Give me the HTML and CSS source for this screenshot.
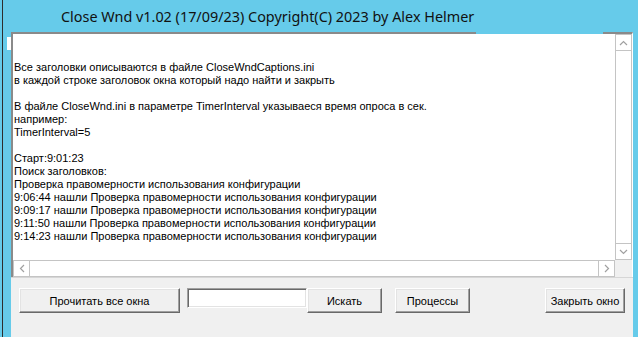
FILE: index.html
```html
<!DOCTYPE html>
<html lang="ru">
<head>
    <meta charset="UTF-8">
    <title>Close Wnd</title>
    <link rel="stylesheet" href="styles.css">
</head>
<body>
<div class="window">
    <div class="titlebar">
        <span class="caption">Close Wnd v1.02 (17/09/23) Copyright(C) 2023 by Alex Helmer</span>
    </div>
    <div class="client">
        <div class="memo">
            <div class="memo-text">Все заголовки описываются в файле CloseWndCaptions.ini
в каждой строке заголовок окна который надо найти и закрыть

В файле CloseWnd.ini в параметре TimerInterval указываеся время опроса в сек.
например:
TimerInterval=5

Старт:9:01:23
Поиск заголовков:
Проверка правомерности использования конфигурации
9:06:44 нашли Проверка правомерности использования конфигурации
9:09:17 нашли Проверка правомерности использования конфигурации
9:11:50 нашли Проверка правомерности использования конфигурации
9:14:23 нашли Проверка правомерности использования конфигурации</div>
            <div class="vscroll">
                <div class="arrow-box">
                    <svg width="9" height="6" viewBox="0 0 9 6"><path d="M1 5 L4.5 1.5 L8 5" fill="none" stroke="#a0a0a0" stroke-width="1.2"/></svg>
                </div>
                <div class="track"></div>
                <div class="arrow-box down">
                    <svg width="9" height="6" viewBox="0 0 9 6"><path d="M1 1 L4.5 4.5 L8 1" fill="none" stroke="#a0a0a0" stroke-width="1.2"/></svg>
                </div>
            </div>
            <div class="hscroll">
                <div class="arrow-box">
                    <svg width="6" height="9" viewBox="0 0 6 9"><path d="M5 1 L1.5 4.5 L5 8" fill="none" stroke="#a0a0a0" stroke-width="1.2"/></svg>
                </div>
                <div class="track"></div>
                <div class="arrow-box">
                    <svg width="6" height="9" viewBox="0 0 6 9"><path d="M1 1 L4.5 4.5 L1 8" fill="none" stroke="#a0a0a0" stroke-width="1.2"/></svg>
                </div>
            </div>
            <div class="corner"></div>
        </div>
        <div class="panel">
            <button class="btn btn-read">Прочитать все окна</button>
            <input type="text" class="edit">
            <button class="btn btn-search">Искать</button>
            <button class="btn btn-proc">Процессы</button>
            <button class="btn btn-close">Закрыть окно</button>
        </div>
    </div>
    <span class="gap-top"></span>
    <span class="white-spot"></span>
</div>
</body>
</html>
```

FILE: styles.css
```css
body {
    margin: 0;
    background-color: #66cbea;
}
.window {
    position: relative;
    width: 638px;
    height: 337px;
    box-sizing: border-box;
    padding: 0 5px 0 11px;
    display: flex;
    flex-direction: column;
    background: linear-gradient(to right, #66cbea 2px, #2e2e2e 2px, #2e2e2e 3px, #66cbea 3px);
    overflow: hidden;
}
.titlebar {
    height: 32px;
    flex: none;
    display: flex;
    align-items: center;
    padding-left: 50px;
}
.caption {
    font-family: "Noto Sans", sans-serif;
    font-size: 14.4px;
    color: #111;
    padding-top: 1px;
}
.client {
    flex: 1;
    display: flex;
    flex-direction: column;
    background-color: #f0f0f0;
}
.memo {
    height: 243px;
    flex: none;
    display: grid;
    grid-template-columns: 1fr 17px;
    grid-template-rows: 1fr 17px;
    border-top: 2px solid #8a8a8a;
    border-left: 2px solid #8a8a8a;
    border-right: 1px solid #fff;
    background-color: #fff;
}
.memo-text {
    padding: 27px 0 0 1px;
    font-family: "Liberation Sans", Arial, sans-serif;
    font-size: 11px;
    line-height: 13px;
    color: #000;
    white-space: pre;
    overflow: hidden;
}
.vscroll {
    display: flex;
    flex-direction: column;
    background-color: #fff;
}
.vscroll .track {
    flex: 1;
    border-left: 1px solid #c4c4c4;
    border-right: 1px solid #c4c4c4;
}
.arrow-box {
    width: 17px;
    height: 17px;
    box-sizing: border-box;
    border: 1px solid #c4c4c4;
    display: flex;
    align-items: center;
    justify-content: center;
    background-color: #fff;
}
.hscroll {
    display: flex;
    background-color: #fff;
}
.hscroll .track {
    flex: 1;
    border-top: 1px solid #c4c4c4;
    border-bottom: 1px solid #c4c4c4;
}
.corner {
    background-color: #f0f0f0;
}
.panel {
    flex: 1;
    display: flex;
    align-items: flex-start;
    padding: 10px 0 0 8px;
    border-top: 1px solid #d6d6d6;
}
.btn {
    height: 25px;
    box-sizing: border-box;
    padding: 0;
    background-color: #f0f0f0;
    border: 1px solid;
    border-color: #fff #696969 #696969 #fff;
    box-shadow: inset -1px -1px #a0a0a0, inset 1px 1px #e3e3e3;
    font-family: "Liberation Sans", Arial, sans-serif;
    font-size: 11px;
    color: #000;
}
.btn-read {
    width: 161px;
}
.edit {
    width: 120px;
    height: 20px;
    box-sizing: border-box;
    margin-left: 7px;
    padding: 0;
    background-color: #fff;
    border: 1px solid;
    border-color: #a0a0a0 #fff #fff #a0a0a0;
    box-shadow: inset 1px 1px #696969, inset -1px -1px #e3e3e3;
}
.btn-search {
    width: 75px;
}
.btn-proc {
    width: 75px;
    margin-left: 13px;
}
.btn-close {
    width: 80px;
    margin-left: 75px;
}
.gap-top {
    position: absolute;
    left: 476px;
    top: 32px;
    width: 127px;
    height: 2px;
    background-color: #66cbea;
}
.white-spot {
    position: absolute;
    left: 7px;
    top: 37px;
    width: 4px;
    height: 13px;
    background-color: #fff;
}
```
